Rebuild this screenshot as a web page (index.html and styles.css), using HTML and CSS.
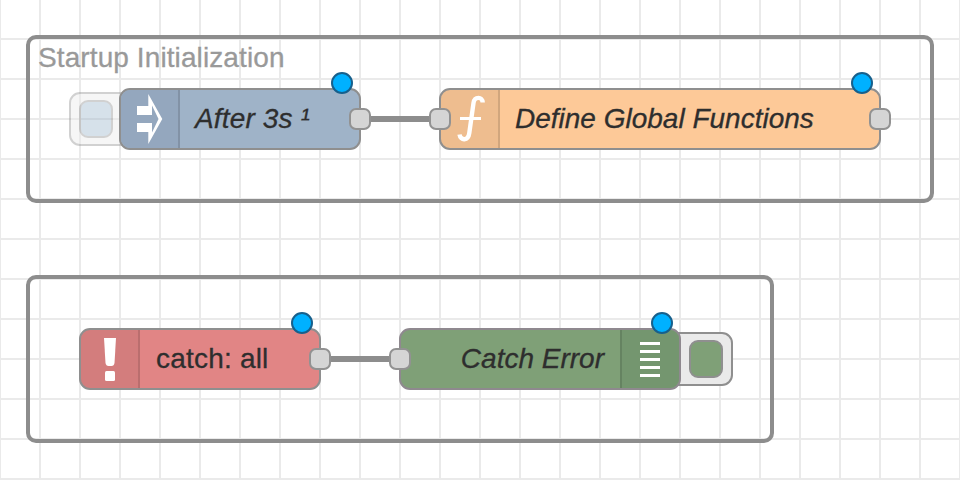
FILE: index.html
```html
<!DOCTYPE html>
<html lang="en">
<head>
<meta charset="utf-8">
<title>Flow</title>
<link rel="stylesheet" href="styles.css">
</head>
<body>
<main class="canvas">
  <section class="group group-startup"><h2 class="group-label"><span>Startup Initialization</span></h2></section>
  <section class="group group-catch"></section>

  <div class="wire wire-startup"></div>
  <div class="wire wire-catch"></div>

  <div class="button button-inject"><span class="button-face"></span></div>
  <div class="button button-debug"><span class="button-face"></span></div>

  <article class="node inject">
    <div class="icon"><svg width="58" height="58" viewBox="121 90 58 58"><path fill="#fff" d="M137 106H148.300V94L162.300 119L148.300 144V132H137V123H152V132.500L158.500 119L152 105.500V115H137Z"/></svg></div>
    <span class="label">After 3s ¹</span>
    <i class="port out"></i><i class="changed"></i>
  </article>

  <article class="node function">
    <div class="icon"><svg width="58" height="58" viewBox="441 90 58 58"><path fill="none" stroke="#fff" stroke-width="4.400" d="M482.700 102.500C482.500 96.500 474.500 96 473.500 103L469.300 133C468.300 141 460.500 141 459.500 134.500"/><path d="M460 118.500H481" stroke="#fff" stroke-width="3"/></svg></div>
    <span class="label">Define Global Functions</span>
    <i class="port in"></i><i class="port out"></i><i class="changed"></i>
  </article>

  <article class="node catch">
    <div class="icon"><svg width="58" height="58" viewBox="81 330 58 58"><path fill="#fff" d="M104 338H116L114.500 363Q114 366 111.500 366H108.500Q106 366 105.500 363Z"/><rect x="105" y="371" width="10" height="10" rx="1.500" fill="#fff"/></svg></div>
    <span class="label">catch: all</span>
    <i class="port out"></i><i class="changed"></i>
  </article>

  <article class="node debug">
    <span class="label">Catch Error</span>
    <div class="icon"><svg width="58" height="58" viewBox="621 330 58 58"><path stroke="#fff" stroke-width="3" d="M640 343.500H660M640 351.500H660M640 359.500H660M640 367.500H660M640 375.500H660"/></svg></div>
    <i class="port in"></i><i class="changed"></i>
  </article>
</main>
</body>
</html>
```
FILE: styles.css
```css
* { box-sizing: border-box; }
body { margin: 0; font-family: "Liberation Sans", Arial, sans-serif; font-size: 28px; }
.canvas {
  position: relative;
  width: 960px;
  height: 480px;
  overflow: hidden;
  background-color: #fff;
  background-image:
    linear-gradient(90deg, #eaeaea 2px, transparent 2px),
    linear-gradient(#eaeaea 2px, transparent 2px);
  background-size: 40px 40px;
  background-position: -1px -2px;
}
.group { position: absolute; left: 26px; height: 168px; border: 4px solid #8d8d8d; border-radius: 10px; }
.group-startup { top: 35px; width: 908px; }
.group-catch { top: 275px; width: 748px; }
.group-label { margin: 3px 0 0 8px; font-size: 28px; font-weight: 400; line-height: 32px; letter-spacing: .1px; color: #999; white-space: nowrap; -webkit-text-stroke: .3px #999; }
.wire { position: absolute; height: 6px; width: 80px; background: #8d8d8d; }
.wire-startup { left: 360px; top: 116px; }
.wire-catch { left: 320px; top: 356px; }
.button {
  position: absolute;
  display: flex;
  align-items: center;
  width: 72px;
  height: 54px;
  border: 2px solid #8f8f8f;
  border-radius: 11px;
  background: #eaeaea;
}
.button-face { width: 34px; height: 38px; border: 2px solid #8f8f8f; border-radius: 9px; }
.button-inject { left: 69px; top: 92px; padding-left: 8px; opacity: .4; }
.button-inject .button-face { background: #9bb5cb; }
.button-debug { left: 661px; top: 332px; padding-right: 8px; justify-content: flex-end; }
.button-debug .button-face { background: #7fa077; }
.node {
  position: absolute;
  display: flex;
  width: 242px;
  height: 62px;
  border: 2px solid #8f8f8f;
  border-radius: 11px;
}
.inject { left: 119px; top: 88px; background: #9fb3c8; }
.function { left: 439px; top: 88px; width: 442px; background: #fdc998; }
.catch { left: 79px; top: 328px; background: #e18585; }
.debug { left: 399px; top: 328px; width: 282px; background: #7fa077; border-color: #8f898f; }
.icon { flex: none; width: 59px; height: 58px; background: rgba(0,0,0,.06); border-right: 2px solid rgba(0,0,0,.12); border-radius: 9px 0 0 9px; }
.inject .icon { background: #94a7be; }
.debug .icon { border-right: 0; border-left: 2px solid rgba(0,0,0,.12); border-radius: 0 9px 9px 0; background: #74966f; }
.icon svg { display: block; }
.debug .icon svg { margin-left: -1px; }
.label { flex: 1; padding-left: 15px; line-height: 57px; color: #2e2e2e; font-style: italic; white-space: nowrap; -webkit-text-stroke: .3px #2e2e2e; }
.inject .label { letter-spacing: .15px; }
.catch .label { padding-left: 16px; font-style: normal; letter-spacing: .2px; }
.debug .label { padding: 0 16px 0 0; text-align: right; }
.port { position: absolute; top: 18px; width: 22px; height: 22px; border: 2px solid #929292; border-radius: 7px; background: #d5d5d5; }
.port.in { left: -12px; }
.port.out { right: -12px; }
.changed { position: absolute; top: -18px; right: 6px; width: 22px; height: 22px; border: 2px solid #17608c; border-radius: 50%; background: #00b1ff; }
```
